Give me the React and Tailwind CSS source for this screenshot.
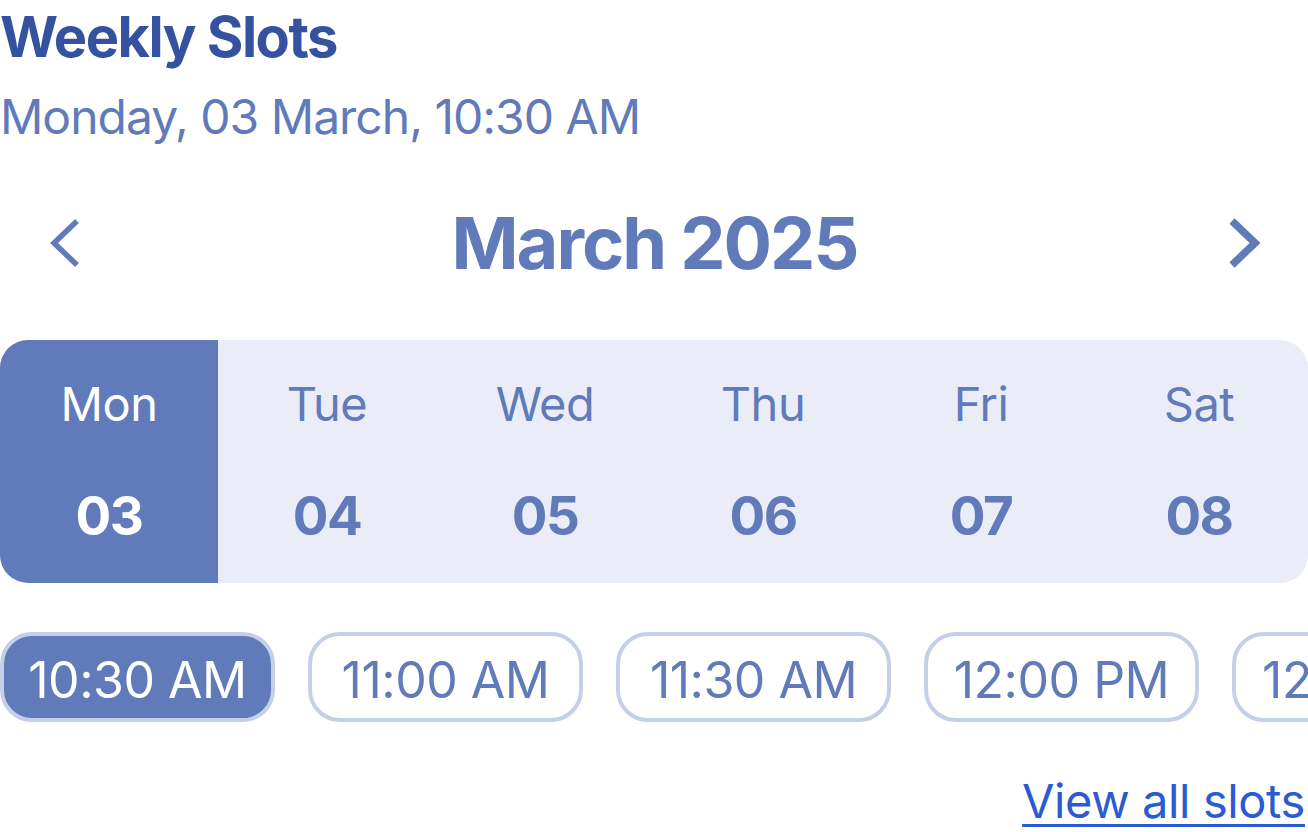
import React, { useState } from "react";

// Weekly slot picker
const days = [
  { name: "Mon", date: "03" },
  { name: "Tue", date: "04" },
  { name: "Wed", date: "05" },
  { name: "Thu", date: "06" },
  { name: "Fri", date: "07" },
  { name: "Sat", date: "08" },
];

const slots = ["10:30 AM", "11:00 AM", "11:30 AM", "12:00 PM", "12:30 PM"];

function Chevron({ dir, width }) {
  const points = dir === "left" ? "28,3 5,25 28,47" : "4,3 27,25 4,47";
  return (
    <svg width="32" height="50" viewBox="0 0 32 50" fill="none">
      <polyline points={points} stroke="#617ab9" strokeWidth={width} strokeLinejoin="miter" />
    </svg>
  );
}

export default function App() {
  const [selectedDay, setSelectedDay] = useState(0);
  const [selectedSlot, setSelectedSlot] = useState(0);

  return (
    <div className="w-[1308px] h-[832px] overflow-hidden bg-white font-['Inter',sans-serif]">
      <h1 className="pt-[9px] text-[56px] leading-[56px] font-bold tracking-[-1.5px] text-[#3452a0]">
        Weekly Slots
      </h1>
      <p className="mt-[26px] text-[48px] leading-[52px] tracking-[-1px] text-[#617ab9]">
        Monday, 03 March, 10:30 AM
      </p>

      <div className="mt-[52px] flex items-center justify-between pl-[49px] pr-[48px] h-[96px]">
        <button className="flex items-center">
          <Chevron dir="left" width={5.5} />
        </button>
        <h2 className="text-[72px] leading-[80px] font-bold tracking-[-2px] text-[#617ab9]">March 2025</h2>
        <button className="flex items-center">
          <Chevron dir="right" width={7.5} />
        </button>
      </div>

      <div className="mt-[49px] grid grid-cols-6 h-[243px] rounded-[28px] bg-[#eaedf7] overflow-hidden">
        {days.map((day, i) => (
          <button
            key={day.name}
            onClick={() => setSelectedDay(i)}
            className={
              "flex flex-col items-center " +
              (selectedDay === i ? "bg-[#617ab9] text-white" : "text-[#617ab9]")
            }
          >
            <span className="mt-[36px] text-[47px] leading-[56px] tracking-[-0.5px]">{day.name}</span>
            <span className="mt-[56px] text-[53px] leading-[56px] font-bold tracking-[-1.5px]">{day.date}</span>
          </button>
        ))}
      </div>

      <div className="mt-[49px] flex gap-[33px]">
        {slots.map((slot, i) => (
          <button
            key={slot}
            onClick={() => setSelectedSlot(i)}
            className={
              "w-[275px] h-[90px] shrink-0 rounded-[32px] border-[4px] border-[#c5d0e8] pt-[5px] text-[50px] leading-[56px] tracking-[-0.5px] flex items-center justify-center " +
              (selectedSlot === i ? "bg-[#617ab9] text-white" : "bg-white text-[#617ab9]")
            }
          >
            {slot}
          </button>
        ))}
      </div>

      <div className="mt-[53px] flex justify-end pr-[3px]">
        <a href="#" className="text-[47px] leading-[52px] tracking-[-0.4px] text-[#2a5bd2] underline underline-offset-[6px] decoration-[3px]">
          View all slots
        </a>
      </div>
    </div>
  );
}
